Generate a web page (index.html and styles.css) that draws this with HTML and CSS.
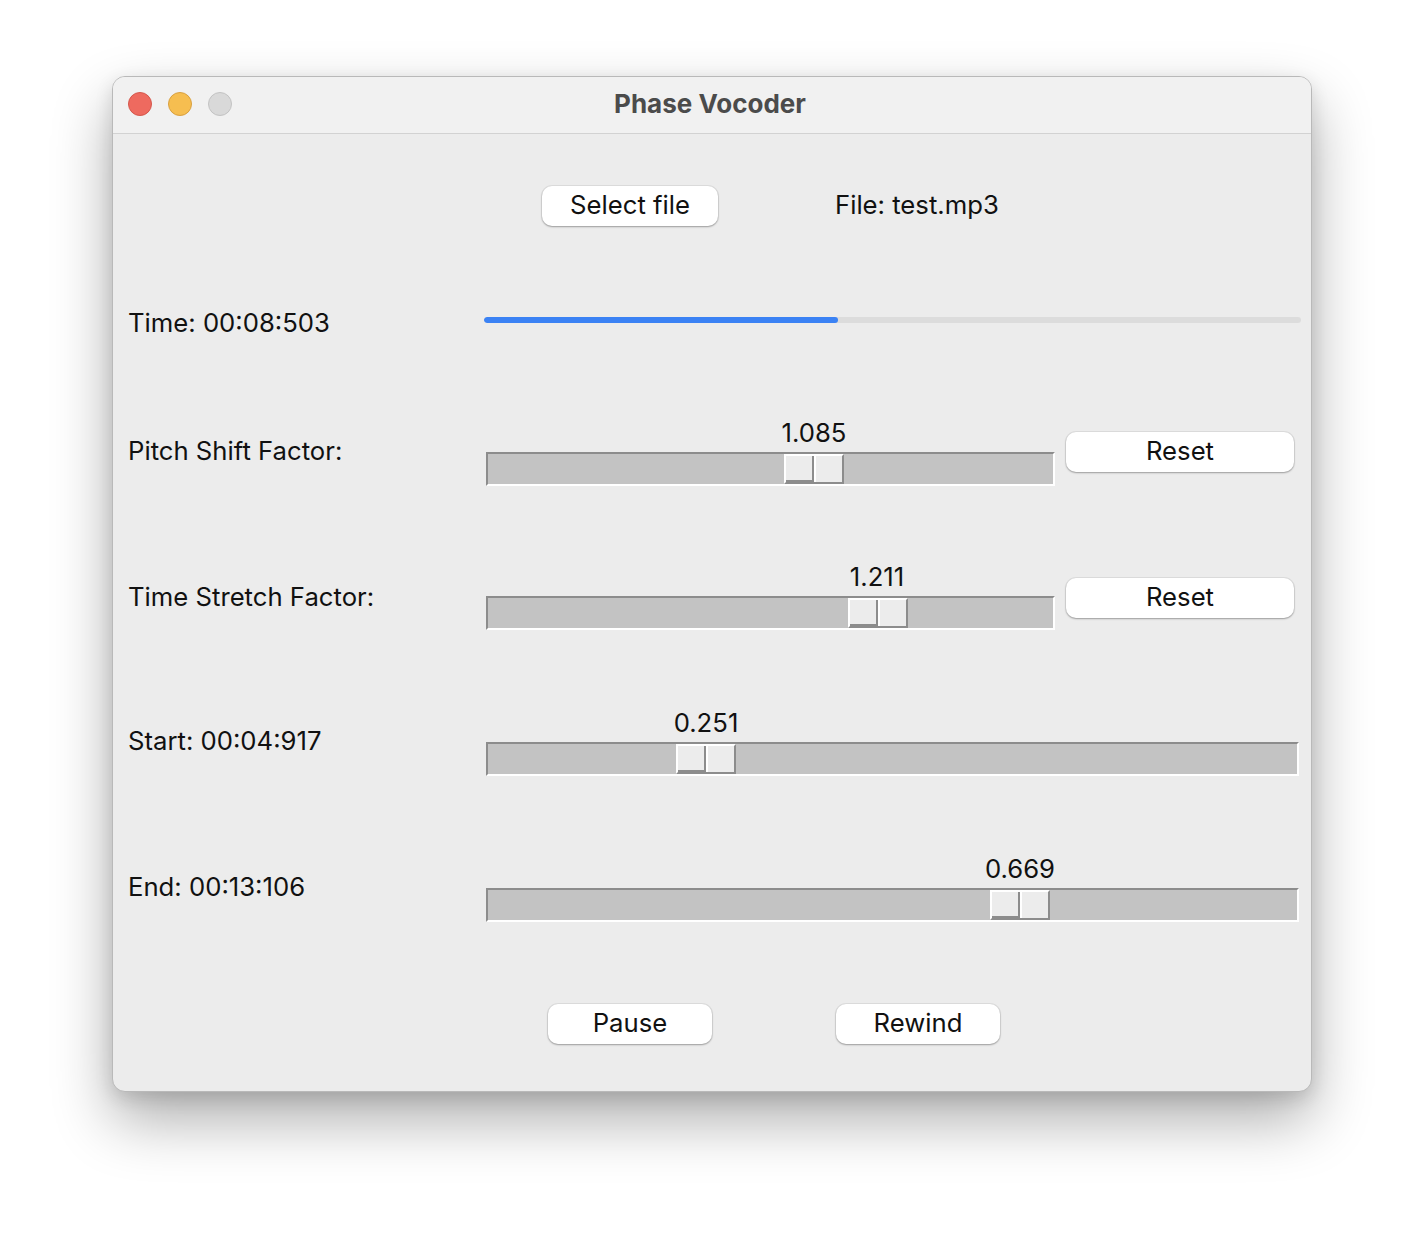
FILE: index.html
```html
<!DOCTYPE html>
<html>
<head>
<meta charset="utf-8">
<title>Phase Vocoder</title>
<link rel="stylesheet" href="styles.css">
</head>
<body>
<div class="desk">
  <div class="window">
    <div class="titlebar">
      <div class="lights">
        <span class="light red"></span>
        <span class="light yellow"></span>
        <span class="light gray"></span>
      </div>
      <div class="title">Phase Vocoder</div>
    </div>
    <div class="content">
      <div class="row row-file">
        <button class="btn btn-select">Select file</button>
        <span class="text">File: test.mp3</span>
      </div>
      <div class="row row-grid row-time">
        <span class="text label">Time: 00:08:503</span>
        <div class="progress span2"><div class="progress-fill" style="width:43.3%"></div></div>
      </div>
      <div class="row row-grid row-scale">
        <span class="text label">Pitch Shift Factor:</span>
        <div class="scale scale-first">
          <div class="scale-value"><span class="text value" style="left:328px">1.085</span></div>
          <div class="trough"><div class="thumb" style="left:296px"><span class="half"></span><span class="half"></span></div></div>
        </div>
        <button class="btn btn-reset">Reset</button>
      </div>
      <div class="row row-grid row-scale">
        <span class="text label">Time Stretch Factor:</span>
        <div class="scale">
          <div class="scale-value"><span class="text value" style="left:391px">1.211</span></div>
          <div class="trough"><div class="thumb" style="left:360px"><span class="half"></span><span class="half"></span></div></div>
        </div>
        <button class="btn btn-reset">Reset</button>
      </div>
      <div class="row row-grid row-scale">
        <span class="text label label-low">Start: 00:04:917</span>
        <div class="scale span2 wide">
          <div class="scale-value"><span class="text value" style="left:220px">0.251</span></div>
          <div class="trough"><div class="thumb" style="left:188px"><span class="half"></span><span class="half"></span></div></div>
        </div>
      </div>
      <div class="row row-grid row-scale">
        <span class="text label label-low">End: 00:13:106</span>
        <div class="scale span2 wide">
          <div class="scale-value"><span class="text value" style="left:534px">0.669</span></div>
          <div class="trough"><div class="thumb" style="left:502px"><span class="half"></span><span class="half"></span></div></div>
        </div>
      </div>
      <div class="row row-buttons">
        <button class="btn btn-action">Pause</button>
        <button class="btn btn-action">Rewind</button>
      </div>
    </div>
  </div>
</div>
</body>
</html>
```

FILE: styles.css
```css
* { box-sizing: border-box; }
html, body { margin: 0; padding: 0; background: #ffffff; }
body { font-family: Inter, "Noto Sans", "Liberation Sans", sans-serif; }

.desk {
  width: 1424px;
  height: 1240px;
  padding: 76px 112px 0 112px;
}

.window {
  width: 1200px;
  height: 1016px;
  border-radius: 13px;
  background: #ececec;
  border: 1px solid #b9b9b9;
  box-shadow: 0 28px 60px rgba(0,0,0,0.32), 0 6px 18px rgba(0,0,0,0.12);
  overflow: hidden;
  display: flex;
  flex-direction: column;
}

.titlebar {
  height: 57px;
  flex: none;
  background: #f1f1f1;
  border-bottom: 1px solid #d2d2d2;
  display: flex;
  align-items: center;
  position: relative;
}

.lights {
  display: flex;
  gap: 16px;
  padding-left: 15px;
  padding-bottom: 2px;
}

.light {
  width: 24px;
  height: 24px;
  border-radius: 50%;
  display: block;
}
.light.red { background: #ee6a5f; border: 1px solid #d5574c; }
.light.yellow { background: #f6be50; border: 1px solid #d9a040; }
.light.gray { background: #d9d9d9; border: 1px solid #c3c3c3; }

.title {
  position: absolute;
  left: 0;
  right: 0;
  top: 0;
  bottom: 4px;
  display: flex;
  align-items: center;
  justify-content: center;
  font-size: 26px;
  font-weight: 700;
  color: #4b4b4b;
  pointer-events: none;
  padding-right: 4px;
}

.content {
  flex: 1;
  display: flex;
  flex-direction: column;
}

.text {
  font-size: 25.7px;
  color: #111111;
  line-height: 30px;
  white-space: nowrap;
}

.row { flex: none; }

.row-grid {
  display: grid;
  grid-template-columns: 373px 569px 1fr;
  align-items: start;
}

.label { padding-left: 15px; margin-top: 68px; }
.label.label-low { margin-top: 66px; }

.span2 { grid-column: 2 / 4; }

.row-file {
  height: 144px;
  display: flex;
  align-items: center;
  padding-left: 429px;
  gap: 117px;
  padding-bottom: 2px;
}
.row-file .btn { margin-top: 2px; }

.row-time {
  height: 90px;
  align-items: center;
}
.row-time .label { margin-top: 0; }

.progress {
  height: 6px;
  border-radius: 3px;
  background: #dcdcdc;
  margin-left: -2px;
  margin-right: 10px;
  margin-top: -6px;
  overflow: hidden;
}
.progress-fill {
  height: 100%;
  background: #3b82f4;
  border-radius: 3px;
}

.row-scale { height: 146px; }

.scale {
  display: flex;
  flex-direction: column;
  margin-top: 50px;
}
.scale.scale-first { margin-top: 52px; }
.scale.wide { margin-right: 12px; }

.scale-value {
  height: 32px;
  position: relative;
}
.value {
  position: absolute;
  top: -1px;
  line-height: 28px;
  transform: translateX(-50%);
}

.trough {
  height: 34px;
  background: #c3c3c3;
  border-top: 2px solid #8c8c8c;
  border-left: 2px solid #8c8c8c;
  border-bottom: 2px solid #ffffff;
  border-right: 2px solid #ffffff;
  position: relative;
}

.thumb {
  position: absolute;
  top: 0;
  width: 60px;
  height: 30px;
  display: flex;
  border-top: 2px solid #ffffff;
  border-left: 2px solid #ffffff;
  border-bottom: 2px solid #8c8c8c;
  border-right: 2px solid #8c8c8c;
  background: #ececec;
}
.half {
  flex: 1;
  display: block;
  background: #ececec;
}
.half:first-child {
  border-right: 2px solid #8c8c8c;
  border-bottom: 2px solid #8c8c8c;
}
.half:last-child {
  border-left: 2px solid #ffffff;
}

.btn {
  font-family: inherit;
  font-size: 25.7px;
  color: #111111;
  background: #ffffff;
  border: none;
  border-radius: 10px;
  box-shadow: 0 0 0 1px rgba(0,0,0,0.06), 0 1px 2px rgba(0,0,0,0.3);
  height: 40px;
  padding: 0 0 2px 0;
  line-height: 38px;
  cursor: default;
}

.btn-select { width: 176px; }

.btn-reset {
  width: 228px;
  margin-left: 11px;
  margin-top: 64px;
}

.row-buttons {
  flex: 1;
  display: flex;
  align-items: flex-start;
  padding-top: 52px;
  padding-left: 435px;
  gap: 124px;
}
.btn-action { width: 164px; }
```
